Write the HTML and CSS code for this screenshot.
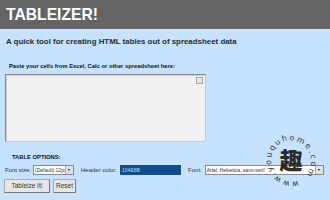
FILE: index.html
```html
<!DOCTYPE html>
<html>
<head>
<meta charset="utf-8">
<link rel="stylesheet" href="styles.css">
</head>
<body>
<header class="top"><h1 class="title">TABLEIZER!</h1></header>
<main class="content">
  <p class="intro">A quick tool for creating HTML tables out of spreadsheet data</p>
  <p class="paste-label">Paste your cells from Excel, Calc or other spreadsheet here:</p>
  <div class="area"><span class="area-scroll"></span></div>
  <p class="options-label">TABLE OPTIONS:</p>
  <div class="options">
    <span class="opt-text">Font size:</span>
    <span class="select select-size"><span class="select-val">(Default) 12px</span><span class="arrow"></span></span>
    <span class="opt-text opt-gap">Header color:</span>
    <span class="color-input">104E8B</span>
    <span class="opt-text opt-gap">Font:</span>
    <span class="select select-font"><span class="select-val">Arial, Helvetica, sans-serif</span><span class="arrow"></span></span>
  </div>
  <div class="buttons">
    <span class="btn btn-go">Tableize It!</span>
    <span class="btn btn-reset">Reset</span>
  </div>
</main>
<div class="watermark">
  <svg width="70" height="70" viewBox="256 126 70 70">
    <defs>
      <path id="ring" d="M 298.2 180.7 A 21 21 0 0 1 283.8 141.3 A 21 21 0 0 1 298.2 180.7"/>
    </defs>
    <text class="wm-ring" textLength="117"><textPath href="#ring">www.youquhome.com</textPath></text>
    <text class="wm-char" x="291" y="169" text-anchor="middle">趣</text>
  </svg>
</div>
</body>
</html>
```
FILE: styles.css
```css
html, body {
  margin: 0;
  padding: 0;
}
body {
  width: 330px;
  height: 200px;
  overflow: hidden;
  background: #c6e2ff;
  font-family: "Liberation Sans", Arial, sans-serif;
  color: #222;
  position: relative;
}
.top {
  background: #646464;
  height: 29px;
  display: flex;
  align-items: center;
  padding-left: 6px;
}
.title {
  margin: 0;
  font-size: 15.7px;
  font-weight: bold;
  color: #fff;
  line-height: 1;
  padding-top: 1px;
}
.content {
  padding: 0 0 0 5px;
}
.intro {
  margin: 8px 0 0 1px;
  font-size: 7.9px;
  font-weight: bold;
  line-height: 10px;
  color: #2a2a2a;
}
.paste-label {
  margin: 16px 0 0 4px;
  font-size: 5.8px;
  font-weight: bold;
  line-height: 7px;
  color: #111;
}
.area {
  position: relative;
  margin-top: 4px;
  width: 199px;
  height: 66px;
  background: #f0f0f0;
  border: 1px solid #8a8a8a;
  border-right-color: #c8c8c8;
  border-bottom-color: #c8c8c8;
  box-shadow: inset 1px 1px 0 #d0d0d0;
}
.area-scroll {
  position: absolute;
  top: 2px;
  right: 2px;
  width: 5px;
  height: 5px;
  background: #e4e4e4;
  border: 1px solid #a8a8a8;
}
.options-label {
  margin: 12px 0 0 7px;
  font-size: 5.8px;
  font-weight: bold;
  line-height: 7px;
  color: #111;
}
.options {
  display: flex;
  align-items: center;
  margin-top: 3px;
  height: 12px;
}
.opt-text {
  flex: none;
  white-space: nowrap;
  font-size: 6px;
  color: #333;
  line-height: 12px;
}
.opt-gap { margin-left: 7px; }
.select {
  flex: none;
  display: flex;
  align-items: center;
  justify-content: space-between;
  height: 10px;
  background: #fff;
  border: 1px solid #888;
  box-sizing: border-box;
  margin-left: 2px;
}
.select-size { width: 41px; }
.select-font { width: 119px; margin-left: 3px; }
.select-val {
  font-size: 5px;
  color: #333;
  padding-left: 1px;
  white-space: nowrap;
  overflow: hidden;
}
.arrow {
  position: relative;
  width: 7px;
  height: 8px;
  background: #e2e2e2;
  border-left: 1px solid #aaa;
  flex: none;
}
.arrow::after {
  content: "";
  position: absolute;
  left: 2px;
  top: 3px;
  border-left: 1.5px solid transparent;
  border-right: 1.5px solid transparent;
  border-top: 2px solid #222;
}
.color-input {
  flex: none;
  width: 61px;
  height: 10px;
  margin-left: 3px;
  background: #104e8b;
  color: #c8d8f0;
  font-size: 5px;
  line-height: 10px;
  padding-left: 2px;
  box-sizing: border-box;
}
.buttons {
  display: flex;
  gap: 3px;
  margin-top: 3px;
  margin-left: -1px;
}
.btn {
  height: 14px;
  box-sizing: border-box;
  background: #e6e6e6;
  border: 1px solid #aaa;
  border-right-color: #777;
  border-bottom-color: #777;
  font-size: 6.5px;
  line-height: 12px;
  color: #333;
  text-align: center;
  white-space: nowrap;
}
.btn-go { width: 46px; }
.btn-reset { width: 23px; }
.watermark {
  position: absolute;
  left: 256px;
  top: 126px;
  width: 70px;
  height: 70px;
}
.watermark svg { display: block; }
.wm-ring {
  font-family: "DejaVu Sans", sans-serif;
  font-size: 8px;
  fill: #3a3a3a;
}
.wm-char {
  font-family: "Noto Sans CJK SC", sans-serif;
  font-weight: 900;
  font-size: 23px;
  fill: #2a2a2a;
}
```
